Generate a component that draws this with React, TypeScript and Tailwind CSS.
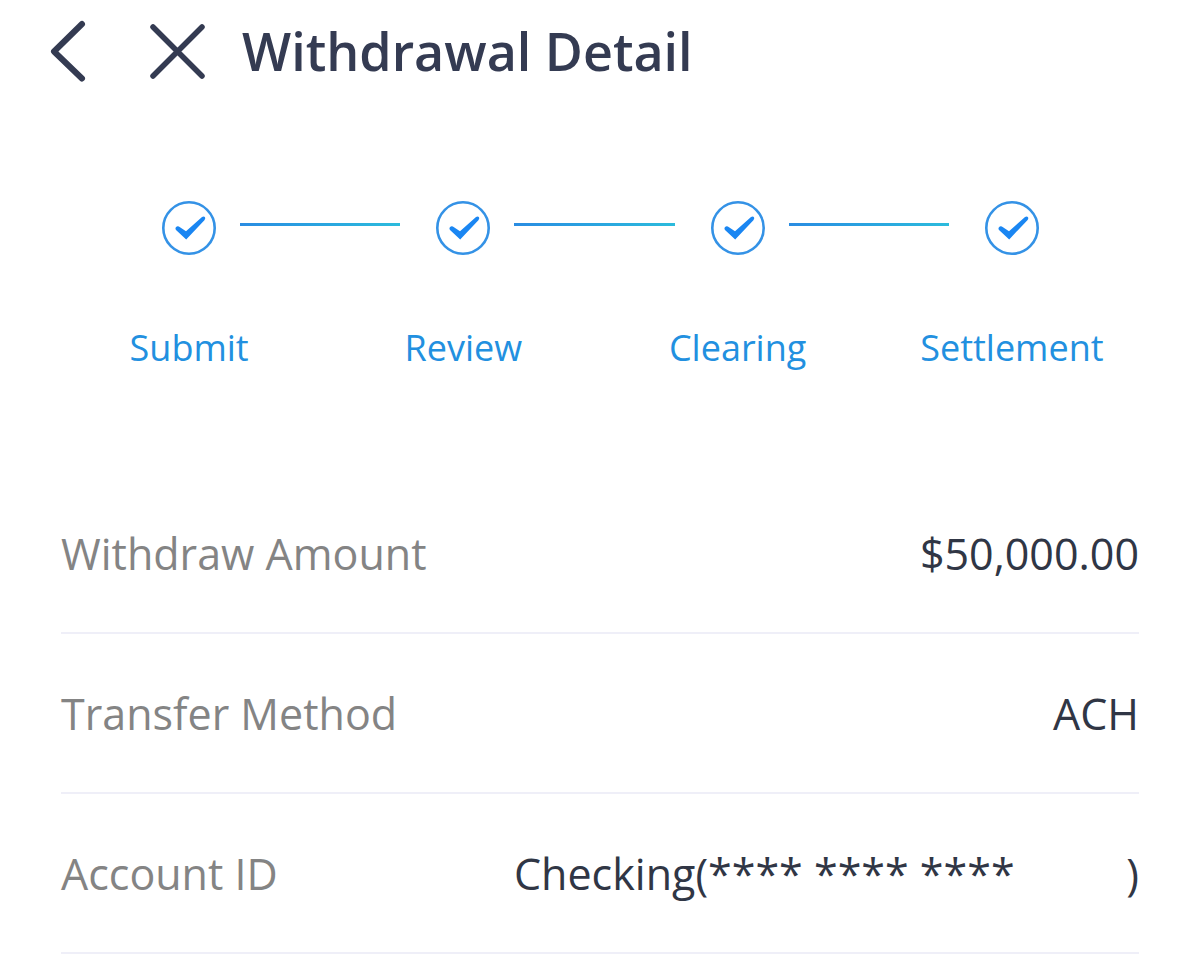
import React from "react";

const steps = ["Submit", "Review", "Clearing", "Settlement"];

const details = [
  { label: "Withdraw Amount", value: "$50,000.00" },
  { label: "Transfer Method", value: "ACH" },
  { label: "Account ID", value: "Checking(**** **** ****          )" },
];

function StepCheck() {
  return (
    <svg width="56" height="56" viewBox="0 0 56 56" fill="none" className="shrink-0" aria-hidden="true">
      <circle cx="28" cy="28" r="25.7" stroke="#3492e6" strokeWidth="2.6" />
      <path
        d="M15.8 26.4 Q17.4 25.8 19 27.2 L25 31.2 L41 17 Q43 15.8 44 17.2 Q44.8 18.4 43.4 20.2 L25.2 39.4 L15 30 Q13.6 27.8 15.8 26.4 Z"
        fill="#1a86f2"
      />
    </svg>
  );
}

export default function App() {
  return (
    <div className="min-h-screen bg-white font-['Open_Sans',sans-serif] text-[#343b52]">
      <header className="flex items-center px-12 pt-[19px]">
        <button type="button" aria-label="Back" className="mr-14">
          <svg width="44" height="64" viewBox="0 0 44 64" fill="none" stroke="currentColor" strokeWidth="6">
            <path d="M34 5 L6 32.5 L34 59.5" strokeLinecap="round" strokeLinejoin="round" />
          </svg>
        </button>
        <button type="button" aria-label="Close" className="mr-[34px]">
          <svg width="60" height="60" viewBox="0 0 60 60" fill="none" stroke="currentColor" strokeWidth="5.5">
            <path d="M5 6 L54 55 M54 6 L5 55" strokeLinecap="round" />
          </svg>
        </button>
        <h1 className="text-[52px] leading-16 font-semibold">Withdrawal Detail</h1>
      </header>

      <ol className="mr-[51px] ml-[52px] mt-[117px] grid grid-cols-4">
        {steps.map((step, index) => (
          <li key={step} className="relative flex flex-col items-center">
            <StepCheck />
            {index < steps.length - 1 && (
              <span className="absolute top-[23px] left-[calc(50%+51px)] h-[3px] w-[calc(100%-114px)] bg-linear-to-r from-[#2a8ce2] to-[#2cbbdc]" />
            )}
            <span className="mt-17 text-4xl leading-12 text-[#2290e0]">{step}</span>
          </li>
        ))}
      </ol>

      <dl className="mx-[61px] mt-[102px] text-[43px] leading-16">
        {details.map((item) => (
          <div key={item.label} className="flex justify-between border-b-2 border-[#efeff8] pt-12 pb-[46px]">
            <dt className="text-[#848484]">{item.label}</dt>
            <dd className="whitespace-pre text-[#303645]">{item.value}</dd>
          </div>
        ))}
      </dl>
    </div>
  );
}
